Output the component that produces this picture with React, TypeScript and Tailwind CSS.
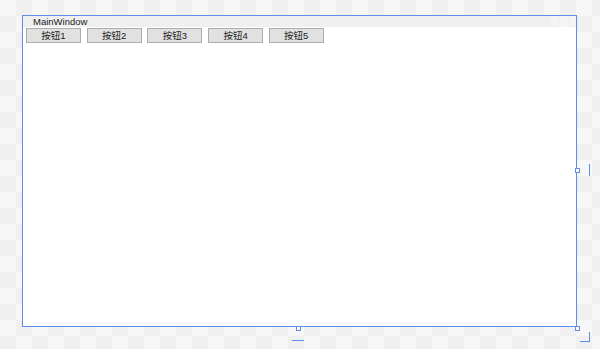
import React from 'react';

const buttons = ['按钮1', '按钮2', '按钮3', '按钮4', '按钮5'];

const cjk = "font-['Liberation_Sans','Noto_Sans_CJK_SC',sans-serif]";

export default function App() {
  return (
    <div className="relative w-[600px] h-[349px] overflow-hidden bg-[#f7f7f7] bg-[image:conic-gradient(#f0f0f0_25%,#f7f7f7_0_50%,#f0f0f0_0_75%,#f7f7f7_0)] bg-[length:32px_32px] pt-[15px] pl-[22px]">
      {/* designer form */}
      <div className="w-[555px] h-[312px] border border-[#5f8fe8] bg-white flex flex-col">
        <div className="h-[11px] bg-[#f0f0f0] flex items-center">
          <span className={`ml-[10px] text-[9.5px] leading-none text-[#1a1a1a] ${cjk}`}>MainWindow</span>
          <div className="ml-auto flex h-full">
            <div className="w-[8px] h-full bg-[#f4f4f4]" />
            <div className="w-[9px] h-full bg-[#f5f5f5] border-l border-[#efefef]" />
            <div className="w-[8px] h-full bg-[#f4f4f4] border-l border-[#efefef]" />
          </div>
        </div>
        <div className="flex gap-[5.7px] pl-[3px] pt-[1px]">
          {buttons.map(b => (
            <div
              key={b}
              className={`w-[55px] h-[15px] bg-[#e1e1e1] border border-[#adadad] flex items-center justify-center text-[9.5px] leading-none text-[#222] ${cjk}`}
            >
              {b}
            </div>
          ))}
        </div>
      </div>

      {/* resize handles */}
      <div className="absolute left-[575px] top-[168px] w-[5px] h-[5px] border border-[#5f8fe8] bg-white" />
      <div className="absolute left-[589px] top-[164px] w-px h-[12px] bg-[#5f8fe8]" />
      <div className="absolute left-[296px] top-[326px] w-[5px] h-[5px] border border-[#5f8fe8] bg-white" />
      <div className="absolute left-[292px] top-[340px] w-[12px] h-px bg-[#5f8fe8]" />
      <div className="absolute left-[575px] top-[326px] w-[5px] h-[5px] border border-[#5f8fe8] bg-white" />
      <div className="absolute left-[580px] top-[332px] w-[10px] h-[10px] border-r border-b border-[#5f8fe8]" />
    </div>
  );
}
